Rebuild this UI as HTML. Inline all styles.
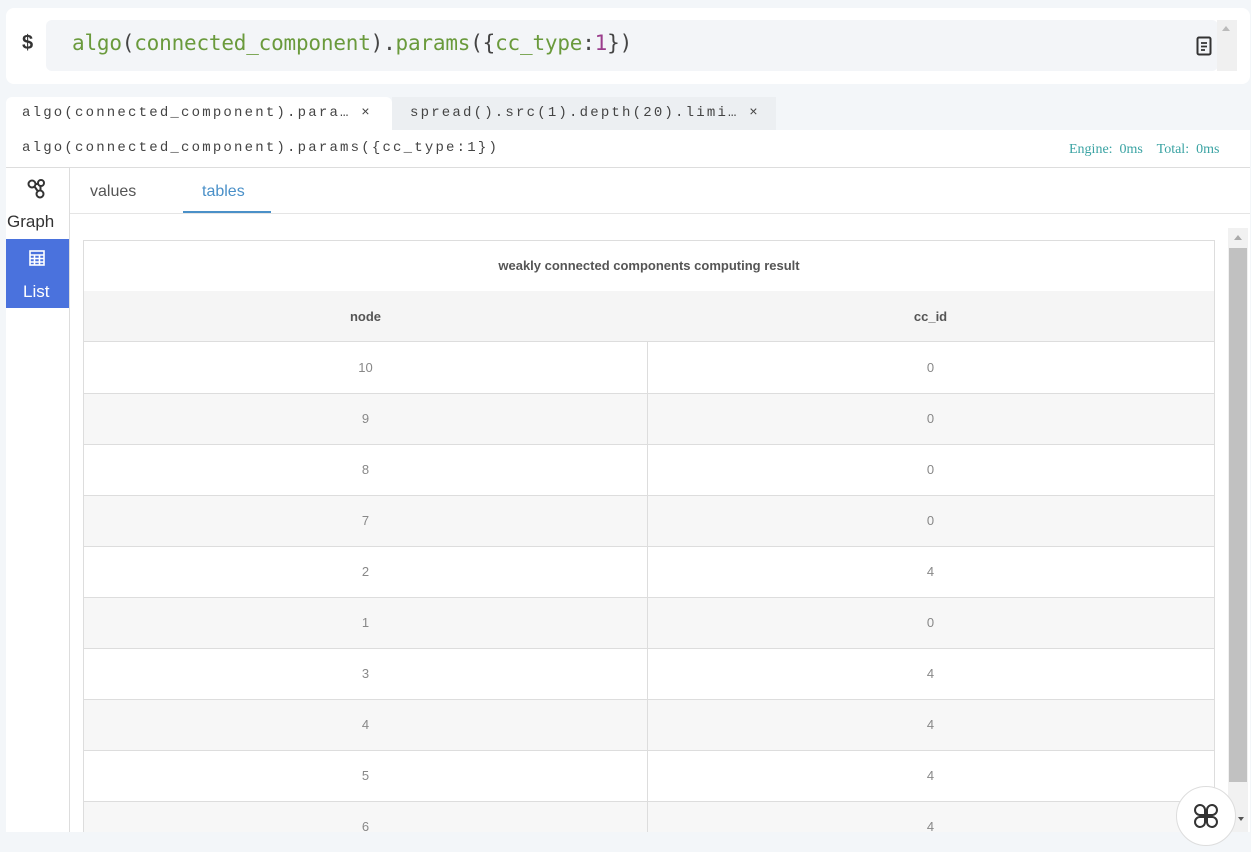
<!DOCTYPE html>
<html><head><meta charset="utf-8">
<style>
*{box-sizing:border-box;margin:0;padding:0}
body{width:1251px;height:852px;background:#f3f6f9;font-family:"Liberation Sans",sans-serif;position:relative;overflow:hidden}
.abs{position:absolute}
.mono{font-family:"Liberation Mono",monospace}
.cell{position:absolute;text-align:center;font-size:13px;color:#888;line-height:51px}
</style></head><body>
<div class="abs" style="left:6px;top:8px;width:1244px;height:76px;background:#fff;border-radius:8px"></div>
<div class="abs" style="left:22px;top:32px;font-size:20px;font-weight:bold;color:#333">$</div>
<div class="abs" style="left:46px;top:20px;width:1172px;height:51px;background:#f3f5f8;border-radius:6px"></div>
<div class="abs" style="left:1217px;top:20px;width:20px;height:51px;background:#f0f0f0"></div>
<div class="abs" style="left:1222px;top:26px;width:0;height:0;border-left:4px solid transparent;border-right:4px solid transparent;border-bottom:5px solid #bbb"></div>
<div class="abs" style="left:72px;top:31px;color:#6a9a3c;font-family:'DejaVu Sans Mono',monospace;font-size:21px;letter-spacing:-0.2px;white-space:pre"><span style="color:#6a9a3c">algo</span><span style="color:#444">(</span>connected_component<span style="color:#444">).</span>params<span style="color:#444">({</span>cc_type<span style="color:#444">:</span><span style="color:#9b3d8c">1</span><span style="color:#444">})</span></div>
<svg class="abs" style="left:1196px;top:36px" width="16" height="20" viewBox="0 0 16 20"><rect x="1.5" y="1.5" width="13" height="17" rx="1.5" fill="none" stroke="#333" stroke-width="2"/><path d="M5 7h6M5 10.5h6M5 14h4" stroke="#333" stroke-width="1.8"/></svg>

<div class="abs" style="left:6px;top:97px;width:386px;height:34px;background:#fff;border-radius:6px 6px 0 0"></div>
<div class="abs" style="left:392px;top:97px;width:384px;height:33px;background:#eceff2"></div>
<div class="abs mono" style="left:22px;top:105px;font-size:14px;letter-spacing:2.2px;color:#444;white-space:pre">algo(connected_component).para… ×</div>
<div class="abs mono" style="left:410px;top:105px;font-size:14px;letter-spacing:2.2px;color:#444;white-space:pre">spread().src(1).depth(20).limi… ×</div>
<div class="abs" style="left:6px;top:130px;width:1244px;height:702px;background:#fff"></div>
<div class="abs mono" style="left:22px;top:140px;font-size:14px;letter-spacing:2.2px;color:#444;white-space:pre">algo(connected_component).params({cc_type:1})</div>
<div class="abs" style="left:1069px;top:142px;font-size:14px;color:#3aa3a3;font-family:'Liberation Serif',serif;white-space:pre">Engine:  0ms    Total:  0ms</div>
<div class="abs" style="left:6px;top:167px;width:1244px;height:1px;background:#ddd"></div>
<div class="abs" style="left:69px;top:168px;width:1px;height:664px;background:#ddd"></div>
<svg class="abs" style="left:27px;top:178px" width="20" height="22" viewBox="0 0 20 22" fill="none" stroke="#333" stroke-width="2"><circle cx="5" cy="6" r="3.5"/><circle cx="14" cy="5" r="3"/><circle cx="13" cy="16" r="3.5"/><path d="M8.5 6h2.5M13.5 8v4.5M7.5 8.5l3.5 5"/></svg>
<div class="abs" style="left:7px;top:212px;font-size:17px;color:#333">Graph</div>
<div class="abs" style="left:6px;top:239px;width:63px;height:69px;background:#4a72dd"></div>
<svg class="abs" style="left:29px;top:250px" width="16" height="16" viewBox="0 0 16 16" fill="none" stroke="#fff" stroke-width="1.6"><rect x="1" y="1" width="14" height="14"/><path d="M1 5h14M1 8.5h14M1 12h14M5.5 5v10M10.5 5v10"/></svg>
<div class="abs" style="left:23px;top:282px;font-size:17px;color:#fff">List</div>
<div class="abs" style="left:90px;top:183px;font-size:16px;color:#555">values</div>
<div class="abs" style="left:202px;top:183px;font-size:16px;color:#4a90c8">tables</div>
<div class="abs" style="left:183px;top:211px;width:88px;height:2px;background:#4a90c8"></div>
<div class="abs" style="left:70px;top:213px;width:1180px;height:1px;background:#e5e5e5"></div>

<div class="abs" style="left:83px;top:240px;width:1132px;height:600px;border:1px solid #ddd;background:#fff"></div>
<div class="abs" style="left:83px;top:240px;width:1132px;line-height:51px;text-align:center;font-size:13px;font-weight:bold;color:#555">weakly connected components computing result</div>
<div class="abs" style="left:84px;top:291px;width:1130px;height:51px;background:#f5f5f5;border-bottom:1px solid #ddd"></div>
<div class="cell" style="left:84px;top:291px;width:563px;font-weight:bold;color:#555">node</div>
<div class="cell" style="left:647px;top:291px;width:567px;font-weight:bold;color:#555">cc_id</div>
<div class="abs" style="left:84px;top:393px;width:1130px;height:51px;background:#f7f7f7"></div>
<div class="abs" style="left:84px;top:495px;width:1130px;height:51px;background:#f7f7f7"></div>
<div class="abs" style="left:84px;top:597px;width:1130px;height:51px;background:#f7f7f7"></div>
<div class="abs" style="left:84px;top:699px;width:1130px;height:51px;background:#f7f7f7"></div>
<div class="abs" style="left:84px;top:801px;width:1130px;height:51px;background:#f7f7f7"></div>
<div class="abs" style="left:84px;top:393px;width:1130px;height:1px;background:#ddd"></div>
<div class="abs" style="left:84px;top:444px;width:1130px;height:1px;background:#ddd"></div>
<div class="abs" style="left:84px;top:495px;width:1130px;height:1px;background:#ddd"></div>
<div class="abs" style="left:84px;top:546px;width:1130px;height:1px;background:#ddd"></div>
<div class="abs" style="left:84px;top:597px;width:1130px;height:1px;background:#ddd"></div>
<div class="abs" style="left:84px;top:648px;width:1130px;height:1px;background:#ddd"></div>
<div class="abs" style="left:84px;top:699px;width:1130px;height:1px;background:#ddd"></div>
<div class="abs" style="left:84px;top:750px;width:1130px;height:1px;background:#ddd"></div>
<div class="abs" style="left:84px;top:801px;width:1130px;height:1px;background:#ddd"></div>
<div class="abs" style="left:647px;top:342px;width:1px;height:500px;background:#ddd"></div>
<div class="cell" style="left:84px;top:342px;width:563px">10</div><div class="cell" style="left:647px;top:342px;width:567px">0</div>
<div class="cell" style="left:84px;top:393px;width:563px">9</div><div class="cell" style="left:647px;top:393px;width:567px">0</div>
<div class="cell" style="left:84px;top:444px;width:563px">8</div><div class="cell" style="left:647px;top:444px;width:567px">0</div>
<div class="cell" style="left:84px;top:495px;width:563px">7</div><div class="cell" style="left:647px;top:495px;width:567px">0</div>
<div class="cell" style="left:84px;top:546px;width:563px">2</div><div class="cell" style="left:647px;top:546px;width:567px">4</div>
<div class="cell" style="left:84px;top:597px;width:563px">1</div><div class="cell" style="left:647px;top:597px;width:567px">0</div>
<div class="cell" style="left:84px;top:648px;width:563px">3</div><div class="cell" style="left:647px;top:648px;width:567px">4</div>
<div class="cell" style="left:84px;top:699px;width:563px">4</div><div class="cell" style="left:647px;top:699px;width:567px">4</div>
<div class="cell" style="left:84px;top:750px;width:563px">5</div><div class="cell" style="left:647px;top:750px;width:567px">4</div>
<div class="cell" style="left:84px;top:801px;width:563px">6</div><div class="cell" style="left:647px;top:801px;width:567px">4</div>

<div class="abs" style="left:1228px;top:228px;width:20px;height:604px;background:#f1f1f1"></div>
<div class="abs" style="left:1234px;top:235px;border-left:4px solid transparent;border-right:4px solid transparent;border-bottom:5px solid #aaa"></div>
<div class="abs" style="left:1229px;top:248px;width:18px;height:534px;background:#c1c1c1"></div>
<div class="abs" style="left:0;top:832px;width:1251px;height:20px;background:#f3f6f9"></div>
<div class="abs" style="left:1176px;top:786px;width:60px;height:60px;border-radius:50%;background:#fff;border:1px solid #ddd"></div>
<svg class="abs" style="left:1193px;top:803px" width="26" height="26" viewBox="0 0 26 26" fill="none" stroke="#333" stroke-width="2"><path d="M12 12H6.5A5 5 0 1 1 12 6.5Z"/><path d="M14 12h5.5A5 5 0 1 0 14 6.5Z"/><path d="M12 14H6.5A5 5 0 1 0 12 19.5Z"/><path d="M14 14h5.5A5 5 0 1 1 14 19.5Z"/></svg>
<div class="abs" style="left:1238px;top:817px;border-left:3px solid transparent;border-right:3px solid transparent;border-top:4px solid #555"></div>
</body></html>
